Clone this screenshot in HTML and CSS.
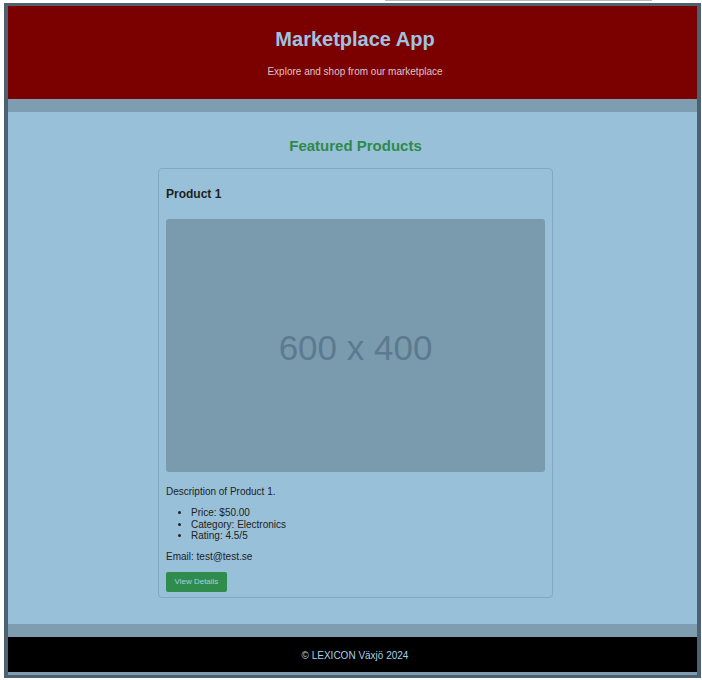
FILE: index.html
```html
<!DOCTYPE html>
<html lang="en">
<head>
<meta charset="utf-8">
<title>Marketplace App</title>
<link rel="stylesheet" href="styles.css">
</head>
<body>
<div class="topline"></div>
<div class="frame">
  <header class="site-header">
    <h1 class="site-title">Marketplace App</h1>
    <p class="site-sub">Explore and shop from our marketplace</p>
  </header>
  <main class="site-main">
    <h2 class="section-title">Featured Products</h2>
    <article class="card">
      <h3 class="card-title">Product 1</h3>
      <div class="placeholder">600 x 400</div>
      <p class="card-desc">Description of Product 1.</p>
      <ul class="card-list">
        <li>Price: $50.00</li>
        <li>Category: Electronics</li>
        <li>Rating: 4.5/5</li>
      </ul>
      <p class="card-email">Email: test@test.se</p>
      <button class="btn" type="button">View Details</button>
    </article>
  </main>
  <footer class="site-footer">
    <p class="footer-text">© LEXICON Växjö 2024</p>
  </footer>
</div>
</body>
</html>
```

FILE: styles.css
```css
html, body {
  margin: 0;
  padding: 0;
  background: #ffffff;
  font-family: "Liberation Sans", Arial, sans-serif;
}

.topline {
  height: 1px;
  width: 267px;
  margin-left: 385px;
  margin-bottom: 2px;
  background: #b9b9b9;
}

.frame {
  margin: 0 1px 0 4px;
  border-style: solid;
  border-color: #4e6170;
  border-width: 3px 4px;
  background: #7f9db1;
  display: flex;
  flex-direction: column;
  gap: 13px;
  padding-bottom: 3px;
}

.site-header {
  background: #7b0000;
  padding: 22px 0 21px 5px;
  text-align: center;
}

.site-title {
  margin: 0;
  font-size: 20px;
  line-height: 23px;
  font-weight: bold;
  color: #9fc4e0;
}

.site-sub {
  margin: 15px 0 0;
  font-size: 10px;
  line-height: 12px;
  color: #dcc4cc;
}

.site-main {
  background: #98c0d9;
  padding: 25px 0 25px 6px;
  height: 512px;
  box-sizing: border-box;
}

.section-title {
  margin: 0 0 14px;
  text-align: center;
  font-size: 15px;
  line-height: 17px;
  font-weight: bold;
  color: #2f8a4a;
}

.card {
  width: 395px;
  box-sizing: border-box;
  margin: 0 auto;
  border: 1px solid #84a8c0;
  border-radius: 4px;
  padding: 7px 7px 5px;
  color: #222222;
}

.card-title {
  margin: 11px 0 18px;
  font-size: 12px;
  line-height: 14px;
  font-weight: bold;
  color: #1f1f1f;
}

.placeholder {
  height: 253px;
  box-sizing: border-box;
  padding-top: 5px;
  background: #7a9aad;
  border-radius: 3px;
  display: flex;
  align-items: center;
  justify-content: center;
  font-size: 35px;
  color: #5c7a8f;
}

.card-desc {
  margin: 14px 0 9px;
  font-size: 10px;
  line-height: 12px;
}

.card-list {
  margin: 0 0 9px;
  padding-left: 25px;
  font-size: 10px;
  line-height: 11.5px;
}

.card-email {
  margin: 0 0 9px;
  font-size: 10px;
  line-height: 12px;
}

.btn {
  display: block;
  height: 20px;
  padding: 0 8.5px;
  border: none;
  border-radius: 2px;
  background: #2f8c4c;
  color: #a9cfdc;
  font-family: "Liberation Sans", Arial, sans-serif;
  font-size: 8px;
  line-height: 20px;
  cursor: pointer;
}

.site-footer {
  background: #000000;
  padding: 13px 0 10px 5px;
  text-align: center;
}

.footer-text {
  margin: 0;
  font-size: 10px;
  line-height: 12px;
  color: #a9d0ea;
}
```
